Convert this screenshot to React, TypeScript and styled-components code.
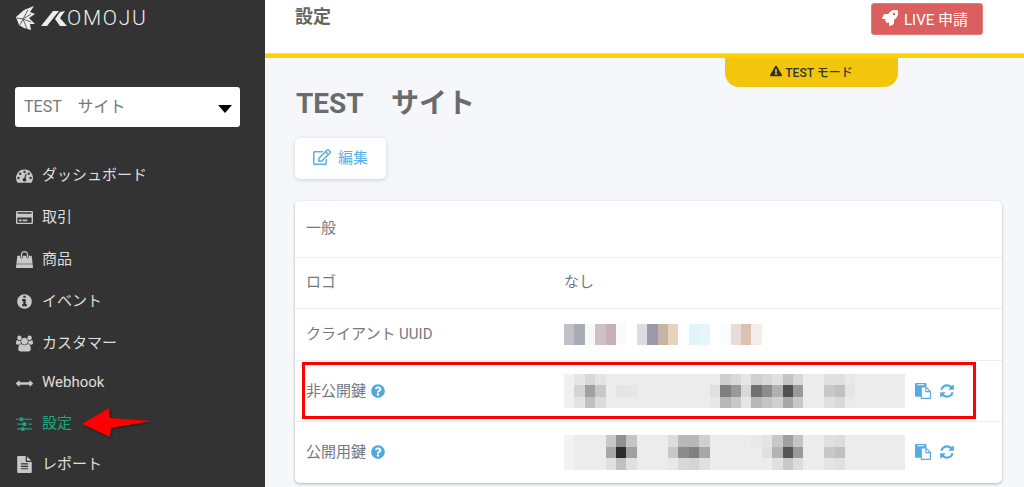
import styled, { createGlobalStyle } from "styled-components";
import type { ComponentType } from "react";
import {
  FaRegCreditCard,
  FaRocket,
  FaExclamationTriangle,
  FaRegEdit,
  FaQuestionCircle,
} from "react-icons/fa";

const GlobalStyle = createGlobalStyle`
  html, body {
    margin: 0;
    height: 100%;
    overflow: hidden;
    font-family: Roboto, "Noto Sans CJK JP", sans-serif;
  }
`;

const Page = styled.div`
  position: relative;
  display: flex;
  width: 1024px;
  height: 487px;
  overflow: hidden;
  background: #f6f7fb;
`;

const Sidebar = styled.aside`
  width: 265px;
  flex: none;
  background: #333333;
  display: flex;
  flex-direction: column;
`;

const LogoRow = styled.div`
  height: 87px;
  padding: 6px 0 0 16px;
  box-sizing: border-box;
  display: flex;
  align-items: flex-start;
`;

const LogoWord = styled.span`
  font-size: 21px;
  font-weight: 300;
  line-height: 25px;
  letter-spacing: 1.7px;
  color: #eeeeee;
`;

const SiteSelect = styled.div`
  width: 225px;
  height: 40px;
  margin-left: 15px;
  padding: 0 8px 5px 9px;
  box-sizing: border-box;
  background: #ffffff;
  border-radius: 3px;
  display: flex;
  align-items: center;
  justify-content: space-between;
  font-size: 16px;
  color: #73787e;
`;

const Caret = styled.span`
  width: 0;
  height: 0;
  margin-top: 8px;
  border-left: 7px solid transparent;
  border-right: 7px solid transparent;
  border-top: 8px solid #000000;
`;

const Nav = styled.nav`
  margin-top: 27px;
  display: flex;
  flex-direction: column;
`;

const NavItem = styled.div<{ $h: number; $active?: boolean }>`
  height: ${(p) => p.$h}px;
  padding-left: 16px;
  display: flex;
  align-items: center;
  font-size: 15px;
  color: ${(p) => (p.$active ? "#1fa67f" : "#dedede")};

  & svg {
    width: 17px;
    height: 17px;
    margin-right: 9px;
    flex: none;
    color: ${(p) => (p.$active ? "#1fa67f" : "#c8c8c8")};
  }
`;

const NavText = styled.span`
  padding-bottom: 3px;
`;

const Main = styled.main`
  position: relative;
  flex: 1;
  min-width: 0;
`;

const Header = styled.header`
  height: 53px;
  background: #ffffff;
  border-bottom: 1px solid #dcdcdc;
  padding: 0 41px 0 31px;
  display: flex;
  align-items: flex-start;
  justify-content: space-between;
`;

const HeaderTitle = styled.h1`
  margin: 5px 0 0 -1px;
  font-size: 18px;
  line-height: 24px;
  font-weight: 700;
  color: #666666;
`;

const LiveButton = styled.button`
  margin-top: 3px;
  width: 112px;
  height: 32px;
  padding: 0 4px 2px 0;
  border: 1px solid #e57a7a;
  border-radius: 3px;
  background: #dc5f5f;
  color: #ffffff;
  font: inherit;
  font-size: 15px;
  display: flex;
  align-items: center;
  justify-content: center;
  gap: 6px;

  & svg {
    width: 16px;
    height: 16px;
  }
`;

const TestStripe = styled.div`
  height: 4px;
  background: #ffd000;
`;

const TestTab = styled.div`
  position: absolute;
  top: 58px;
  left: 460px;
  width: 173px;
  height: 29px;
  padding-bottom: 3px;
  box-sizing: border-box;
  background: #f2c60d;
  border-radius: 0 0 14px 14px;
  display: flex;
  align-items: center;
  justify-content: center;
  gap: 3px;
  font-size: 12px;
  font-weight: 500;
  color: #333333;

  & svg {
    width: 12px;
    height: 12px;
  }
`;

const Content = styled.div`
  padding: 25px 22px 0 30px;
`;

const PageTitle = styled.h2`
  margin: 0;
  padding-left: 1px;
  font-size: 28px;
  line-height: 42px;
  font-weight: 700;
  color: #6b6b6b;
`;

const EditButton = styled.button`
  margin-top: 13px;
  width: 91px;
  height: 41px;
  padding: 0 0 4px;
  border: none;
  border-radius: 5px;
  background: #ffffff;
  box-shadow: 0 1px 4px rgba(0, 0, 0, 0.16);
  color: #5cb0e4;
  font: inherit;
  font-size: 15px;
  display: flex;
  align-items: center;
  justify-content: center;
  gap: 7px;

  & svg {
    width: 18px;
    height: 16px;
  }
`;

const Card = styled.section`
  margin-top: 22px;
  width: 707px;
  background: #ffffff;
  border-radius: 5px;
  box-shadow: 0 1px 3px rgba(0, 0, 0, 0.28);
`;

const Row = styled.div<{ $h: number }>`
  height: ${(p) => p.$h}px;
  padding-left: 11px;
  box-sizing: border-box;
  display: grid;
  grid-template-columns: 258px 1fr;
  align-items: center;
  font-size: 15px;
  color: #73787e;

  & + & {
    border-top: 1px solid #eeeeee;
  }
`;

const RowText = styled.div<{ $lift: number }>`
  padding-bottom: ${(p) => p.$lift}px;
`;

const Label = styled.div`
  display: flex;
  align-items: center;
  gap: 5px;
  padding-bottom: 4px;

  & svg {
    width: 14px;
    height: 14px;
    margin-top: 3px;
    color: #4fa8de;
  }
`;

const KeyCell = styled.div`
  display: flex;
  align-items: center;
  gap: 10px;
`;

const KeyActions = styled.div`
  display: flex;
  align-items: center;
  gap: 8px;
  color: #55ace2;

  & svg {
    width: 16px;
    height: 16px;
  }
`;

const Mosaic = styled.div<{ $cell: number; $plain?: boolean }>`
  width: 341px;
  overflow: hidden;
  display: grid;
  grid-template-columns: repeat(33, 10.42px);
  grid-auto-rows: ${(p) => p.$cell}px;
  background: ${(p) => (p.$plain ? "transparent" : "#ececec")};
`;

const RedBox = styled.div`
  position: absolute;
  left: 302px;
  top: 362px;
  width: 674px;
  height: 57px;
  box-sizing: border-box;
  border: 3px solid #ff0000;
`;

const RedArrow = styled.svg`
  position: absolute;
  left: 78px;
  top: 404px;
  width: 80px;
  height: 38px;
  filter: drop-shadow(1px 1px 1px rgba(0, 0, 0, 0.45));
`;

// Font Awesome 4 shapes, the ones the newer set drew differently
const Fa4 = ({ d, box = 1792 }: { d: string; box?: number }) => (
  <svg viewBox={`0 0 ${box} 1792`} fill="currentColor" aria-hidden="true">
    <path d={d} />
  </svg>
);

const DashboardIcon = () => (
  <Fa4 d="M384 1152q0-53-37.5-90.5t-90.5-37.5-90.5 37.5-37.5 90.5 37.5 90.5 90.5 37.5 90.5-37.5 37.5-90.5zm192-448q0-53-37.5-90.5t-90.5-37.5-90.5 37.5-37.5 90.5 37.5 90.5 90.5 37.5 90.5-37.5 37.5-90.5zm428 481l101-382q6-26-7.5-48.5t-38.5-29.5-48 6.5-30 39.5l-101 382q-60 5-107 43.5t-63 98.5q-20 77 20 146t117 89 146-20 89-117q16-60-6-117t-72-91zm660-33q0-53-37.5-90.5t-90.5-37.5-90.5 37.5-37.5 90.5 37.5 90.5 90.5 37.5 90.5-37.5 37.5-90.5zm-640-640q0-53-37.5-90.5t-90.5-37.5-90.5 37.5-37.5 90.5 37.5 90.5 90.5 37.5 90.5-37.5 37.5-90.5zm448 192q0-53-37.5-90.5t-90.5-37.5-90.5 37.5-37.5 90.5 37.5 90.5 90.5 37.5 90.5-37.5 37.5-90.5zm320 448q0 261-141 483-19 29-54 29h-1402q-35 0-54-29-141-221-141-483 0-182 71-348t191-286 286-191 348-71 348 71 286 191 191 286 71 348z" />
);

const BagIcon = () => (
  <Fa4 d="M1757 1408l35 313q3 28-16 50-19 21-48 21h-1664q-29 0-48-21-19-22-16-50l35-313h1722zm-93-839l86 775h-1708l86-775q3-24 21-40.5t43-16.5h256v128q0 53 37.5 90.5t90.5 37.5 90.5-37.5 37.5-90.5v-128h384v128q0 53 37.5 90.5t90.5 37.5 90.5-37.5 37.5-90.5v-128h256q25 0 43 16.5t21 40.5zm-384-185v256q0 26-19 45t-45 19-45-19-19-45v-256q0-106-75-181t-181-75-181 75-75 181v256q0 26-19 45t-45 19-45-19-19-45v-256q0-159 112.5-271.5t271.5-112.5 271.5 112.5 112.5 271.5z" />
);

const InfoIcon = () => (
  <Fa4 d="M1152 1376v-160q0-14-9-23t-23-9h-96v-512q0-14-9-23t-23-9h-320q-14 0-23 9t-9 23v160q0 14 9 23t23 9h96v320h-96q-14 0-23 9t-9 23v160q0 14 9 23t23 9h448q14 0 23-9t9-23zm-128-896v-160q0-14-9-23t-23-9h-192q-14 0-23 9t-9 23v160q0 14 9 23t23 9h192q14 0 23-9t9-23zm640 416q0 209-103 385.5t-279.5 279.5-385.5 103-385.5-103-279.5-279.5-103-385.5 103-385.5 279.5-279.5 385.5-103 385.5 103 279.5 279.5 103 385.5z" />
);

const UsersIcon = () => (
  <Fa4
    box={1920}
    d="M593 896q-162 5-265 128h-134q-82 0-138-40.5t-56-118.5q0-353 124-353 6 0 43.5 21t97.5 42.5 119 21.5q67 0 133-23-5 37-5 66 0 139 81 256zm1071 637q0 120-73 189.5t-194 69.5h-874q-121 0-194-69.5t-73-189.5q0-53 3.5-103.5t14-109 26.5-108.5 43-97.5 62-81 85.5-53.5 111.5-20q10 0 43 21.5t73 48 107 48 135 21.5 135-21.5 107-48 73-48 43-21.5q61 0 111.5 20t85.5 53.5 62 81 43 97.5 26.5 108.5 14 109 3.5 103.5zm-1024-1277q0 106-75 181t-181 75-181-75-75-181 75-181 181-75 181 75 75 181zm704 384q0 159-112.5 271.5t-271.5 112.5-271.5-112.5-112.5-271.5 112.5-271.5 271.5-112.5 271.5 112.5 112.5 271.5zm576 225q0 78-56 118.5t-138 40.5h-134q-103-123-265-128 81-117 81-256 0-29-5-66 66 23 133 23 59 0 119-21.5t97.5-42.5 43.5-21q124 0 124 353zm-128-609q0 106-75 181t-181 75-181-75-75-181 75-181 181-75 181 75 75 181z"
  />
);

const ArrowsIcon = () => (
  <Fa4 d="M1792 896q0 26-19 45l-256 256q-19 19-45 19t-45-19-19-45v-128h-1024v128q0 26-19 45t-45 19-45-19l-256-256q-19-19-19-45t19-45l256-256q19-19 45-19t45 19 19 45v128h1024v-128q0-26 19-45t45-19 45 19l256 256q19 19 19 45z" />
);

const SlidersIcon = () => (
  <Fa4 d="M480 1408v128h-352v-128h352zm352-128q26 0 45 19t19 45v256q0 26-19 45t-45 19h-256q-26 0-45-19t-19-45v-256q0-26 19-45t45-19h256zm160-384v128h-864v-128h864zm-640-512v128h-352v-128h352zm1312 1024v128h-736v-128h736zm-960-1152q26 0 45 19t19 45v256q0 26-19 45t-45 19h-256q-26 0-45-19t-19-45v-256q0-26 19-45t45-19h256zm320 512q26 0 45 19t19 45v256q0 26-19 45t-45 19h-256q-26 0-45-19t-19-45v-256q0-26 19-45t45-19h256zm640 128v128h-352v-128h352zm0-512v128h-864v-128h864z" />
);

const FileTextIcon = () => (
  <Fa4 d="M1596 476q14 14 28 36h-472v-472q22 14 36 28zm-476 164h544v1056q0 40-28 68t-68 28h-1344q-40 0-68-28t-28-68v-1600q0-40 28-68t68-28h800v544q0 40 28 68t68 28zm160 736v-64q0-14-9-23t-23-9h-704q-14 0-23 9t-9 23v64q0 14 9 23t23 9h704q14 0 23-9t9-23zm0-256v-64q0-14-9-23t-23-9h-704q-14 0-23 9t-9 23v64q0 14 9 23t23 9h704q14 0 23-9t9-23zm0-256v-64q0-14-9-23t-23-9h-704q-14 0-23 9t-9 23v64q0 14 9 23t23 9h704q14 0 23-9t9-23z" />
);

const PasteIcon = () => (
  <Fa4 d="M768 1664h896v-640h-416q-40 0-68-28t-28-68v-416h-384v1152zm256-1440v-64q0-13-9.5-22.5t-22.5-9.5h-704q-13 0-22.5 9.5t-9.5 22.5v64q0 13 9.5 22.5t22.5 9.5h704q13 0 22.5-9.5t9.5-22.5zm256 672h299l-299-299v299zm512 128v672q0 40-28 68t-68 28h-960q-40 0-68-28t-28-68v-160h-544q-40 0-68-28t-28-68v-1344q0-40 28-68t68-28h1088q40 0 68 28t28 68v328q21 13 36 28l408 408q28 28 48 76t20 88z" />
);

const RefreshIcon = () => (
  <Fa4 d="M1639 1056q0 5-1 7-64 268-268 434.5t-478 166.5q-146 0-282.5-55t-243.5-157l-129 129q-19 19-45 19t-45-19-19-45v-448q0-26 19-45t45-19h448q26 0 45 19t19 45-19 45l-137 137q71 66 161 102t187 36q134 0 250-65t186-179q11-17 53-117 8-23 30-23h192q13 0 22.5 9.5t9.5 22.5zm25-800v448q0 26-19 45t-45 19h-448q-26 0-45-19t-19-45 19-45l138-138q-148-137-349-137-134 0-250 65t-186 179q-11 17-53 117-8 23-30 23h-199q-13 0-22.5-9.5t-9.5-22.5v-7q65-268 270-434.5t480-166.5q146 0 284 55.5t245 156.5l130-129q19-19 45-19t45 19 19 45z" />
);

type NavEntry = { label: string; Icon: ComponentType; h: number; active?: boolean };

const navItems: NavEntry[] = [
  { label: "ダッシュボード", Icon: DashboardIcon, h: 42 },
  { label: "取引", Icon: FaRegCreditCard, h: 42 },
  { label: "商品", Icon: BagIcon, h: 42 },
  { label: "イベント", Icon: InfoIcon, h: 42 },
  { label: "カスタマー", Icon: UsersIcon, h: 42 },
  { label: "Webhook", Icon: ArrowsIcon, h: 38 },
  { label: "設定", Icon: SlidersIcon, h: 42, active: true },
  { label: "レポート", Icon: FileTextIcon, h: 40 },
];

// blurred values, sparse per row: column -> colour
type Cells = Record<number, string>;

const uuidRow: Cells = {
  0: "#c0c0c8", 1: "#a8acb4", 2: "#f8f8f8", 3: "#d0c0c4", 4: "#c8b0b8", 5: "#fafafa",
  7: "#dcdce2", 8: "#9a9aac", 9: "#c8b4a4", 10: "#e8d4bc", 12: "#e0f4fa", 13: "#e4f6fc",
  15: "#fafbfd", 16: "#e8dcd8", 17: "#dcc0b0", 18: "#f4eeea",
};

const secretKey: Cells[] = [
  { 0: "#f0f0f0", 1: "#e6e6e6", 2: "#d8d8d8", 3: "#e4e4e4", 15: "#cfcfcf", 16: "#dadada", 17: "#e6e6e6", 18: "#d0d0d0", 19: "#d8d8d8", 20: "#e0e0e0", 21: "#c4c4c4", 22: "#d8d8d8", 25: "#e0e0e0", 26: "#e0e0e0", 27: "#e8e8e8" },
  { 0: "#f0f0f0", 1: "#d4d4d4", 2: "#a0a0a0", 3: "#c8c8c8", 5: "#e4e4e4", 6: "#e6e6e6", 14: "#e0e0e0", 15: "#808080", 16: "#999999", 17: "#d8d8d8", 18: "#707070", 19: "#8c8c8c", 20: "#b0b0b0", 21: "#505050", 22: "#999999", 25: "#c8c8c8", 26: "#c0c0c0", 27: "#e4e4e4" },
  { 0: "#f0f0f0", 1: "#e4e4e4", 2: "#c0c0c0", 3: "#dcdcdc", 14: "#e8e8e8", 15: "#b8b8b8", 16: "#c8c8c8", 17: "#e6e6e6", 18: "#b8b8b8", 19: "#c4c4c4", 20: "#d0d0d0", 21: "#a8a8a8", 22: "#c8c8c8", 25: "#e0e0e0", 26: "#d8d8d8", 27: "#eaeaea" },
];

const publicKey: Cells[] = [
  { 0: "#f2f2f2", 4: "#c8c8c8", 5: "#909090", 6: "#c4c4c4", 10: "#dcdcdc", 11: "#b8b8b8", 12: "#b8b8b8", 13: "#d0d0d0", 18: "#e8e8e8", 19: "#e4e4e4", 20: "#c8c8c8", 21: "#a0a0a0", 22: "#c4c4c4", 25: "#e0e0e0", 26: "#dcdcdc" },
  { 0: "#f2f2f2", 4: "#a8a8a8", 5: "#2c2c2c", 6: "#a0a0a0", 10: "#c8c8c8", 11: "#8c8c8c", 12: "#808080", 13: "#a8a8a8", 18: "#ececec", 19: "#e0e0e0", 20: "#b4b4b4", 21: "#555555", 22: "#9a9a9a", 25: "#c8c8c8", 26: "#c0c0c0" },
  { 0: "#f2f2f2", 4: "#e0e0e0", 5: "#c0c0c0", 6: "#e0e0e0", 10: "#e8e8e8", 11: "#d8d8d8", 12: "#d4d4d4", 13: "#e0e0e0", 20: "#e0e0e0", 21: "#c8c8c8", 22: "#dcdcdc", 25: "#e4e4e4", 26: "#e0e0e0" },
];

const MosaicCells = ({ rows }: { rows: Cells[] }) => (
  <>
    {rows.flatMap((row, r) =>
      Array.from({ length: 33 }, (_, c) => (
        <div key={`${r}-${c}`} style={{ background: row[c] }} />
      ))
    )}
  </>
);

const KomojuLogo = () => (
  <svg width="51" height="26" viewBox="0 0 51 26" fill="#eeeeee" aria-hidden="true">
    {/* fan mark */}
    <path d="M0 11 L8 4 L18 0 L14 6 L19 8 L13 12 L19 18 L14 18 L15 24 L8 22 L3 19 Z" />
    <path
      d="M7 13 L1 12 M7 13 L12 4 M7 13 L15 8 M7 13 L15 16 M7 13 L11 23 M7 13 L4 19"
      stroke="#555555"
      strokeWidth="0.9"
      fill="none"
    />
    {/* K mark */}
    <path d="M25 20 L31 20 L43 5 L37 5 Z" />
    <path d="M39 13 L44 6 L49 5 L44 12 L51 20 L44 20 Z" />
  </svg>
);

const KeyRow = ({ name, rows, h }: { name: string; rows: Cells[]; h: number }) => (
  <Row $h={h}>
    <Label>
      {name}
      <FaQuestionCircle />
    </Label>
    <KeyCell>
      <Mosaic $cell={11.4}>
        <MosaicCells rows={rows} />
      </Mosaic>
      <KeyActions>
        <PasteIcon />
        <RefreshIcon />
      </KeyActions>
    </KeyCell>
  </Row>
);

const App = () => {
  return (
    <Page>
      <GlobalStyle />
      <Sidebar>
        <LogoRow>
          <KomojuLogo />
          <LogoWord>OMOJU</LogoWord>
        </LogoRow>
        <SiteSelect>
          TEST　サイト
          <Caret />
        </SiteSelect>
        <Nav>
          {navItems.map(({ label, Icon, h, active }) => (
            <NavItem key={label} $h={h} $active={active}>
              <Icon />
              <NavText>{label}</NavText>
            </NavItem>
          ))}
        </Nav>
      </Sidebar>
      <Main>
        <Header>
          <HeaderTitle>設定</HeaderTitle>
          <LiveButton>
            <FaRocket />
            LIVE 申請
          </LiveButton>
        </Header>
        <TestStripe />
        <TestTab>
          <FaExclamationTriangle />
          TEST モード
        </TestTab>
        <Content>
          <PageTitle>TEST　サイト</PageTitle>
          <EditButton>
            <FaRegEdit />
            編集
          </EditButton>
          <Card>
            <Row $h={56}>
              <RowText $lift={6}>一般</RowText>
            </Row>
            <Row $h={51}>
              <RowText $lift={6}>ロゴ</RowText>
              <RowText $lift={6}>なし</RowText>
            </Row>
            <Row $h={52}>
              <RowText $lift={4}>クライアント UUID</RowText>
              <Mosaic $cell={10.5} $plain>
                <MosaicCells rows={[uuidRow, uuidRow]} />
              </Mosaic>
            </Row>
            <KeyRow name="非公開鍵" rows={secretKey} h={61} />
            <KeyRow name="公開用鍵" rows={publicKey} h={62} />
          </Card>
        </Content>
      </Main>
      <RedBox />
      <RedArrow viewBox="0 0 80 38" aria-hidden="true">
        <path d="M4 20 L31 4 L32 14 L74 17 L33 24 L32 33 Z" fill="#ff0000" />
      </RedArrow>
    </Page>
  );
};

export default App;
